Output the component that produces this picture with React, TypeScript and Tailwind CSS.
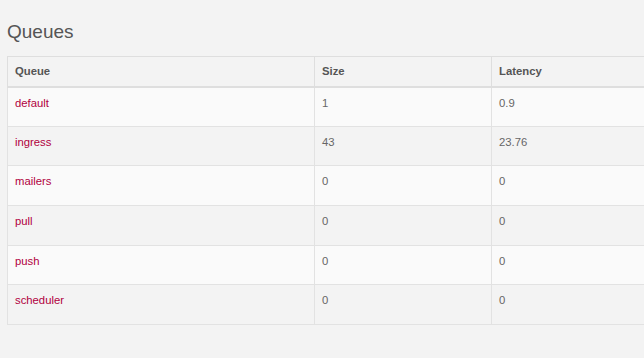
const queues = [
  { name: "default", size: "1", latency: "0.9" },
  { name: "ingress", size: "43", latency: "23.76" },
  { name: "mailers", size: "0", latency: "0" },
  { name: "pull", size: "0", latency: "0" },
  { name: "push", size: "0", latency: "0" },
  { name: "scheduler", size: "0", latency: "0" },
];

export default function App() {
  return (
    <div
      className="min-h-[358px] w-[644px] overflow-hidden bg-[#f3f3f3] px-[7px] text-[#555]"
      style={{ fontFamily: '"Liberation Sans", Arial, sans-serif' }}
    >
      <h3 className="h-[56px] pt-[22px] text-[19px] leading-none font-normal text-[#555]">
        Queues
      </h3>
      <table className="w-[720px] border-collapse text-[11.3px] leading-[20px]">
        <thead>
          <tr>
            <th className="h-[30px] w-[307px] border border-b-2 border-[#dedede] px-[7px] pt-[4px] text-left align-top font-bold">
              Queue
            </th>
            <th className="h-[30px] w-[177px] border border-b-2 border-[#dedede] px-[7px] pt-[4px] text-left align-top font-bold">
              Size
            </th>
            <th className="h-[30px] border border-b-2 border-[#dedede] px-[7px] pt-[4px] text-left align-top font-bold">
              Latency
            </th>
          </tr>
        </thead>
        <tbody>
          {queues.map((q, i) => (
            <tr key={q.name} className={i % 2 === 0 ? "bg-[#fafafa]" : "bg-[#f3f3f3]"}>
              <td className="h-[39.7px] border border-[#e2e2e2] px-[7px] pt-[5px] align-top">
                <a href="#" className="text-[#b1003e]">
                  {q.name}
                </a>
              </td>
              <td className="h-[39.7px] border border-[#e2e2e2] px-[7px] pt-[5px] align-top text-[#666]">
                {q.size}
              </td>
              <td className="h-[39.7px] border border-[#e2e2e2] px-[7px] pt-[5px] align-top text-[#666]">
                {q.latency}
              </td>
            </tr>
          ))}
        </tbody>
      </table>
    </div>
  );
}
